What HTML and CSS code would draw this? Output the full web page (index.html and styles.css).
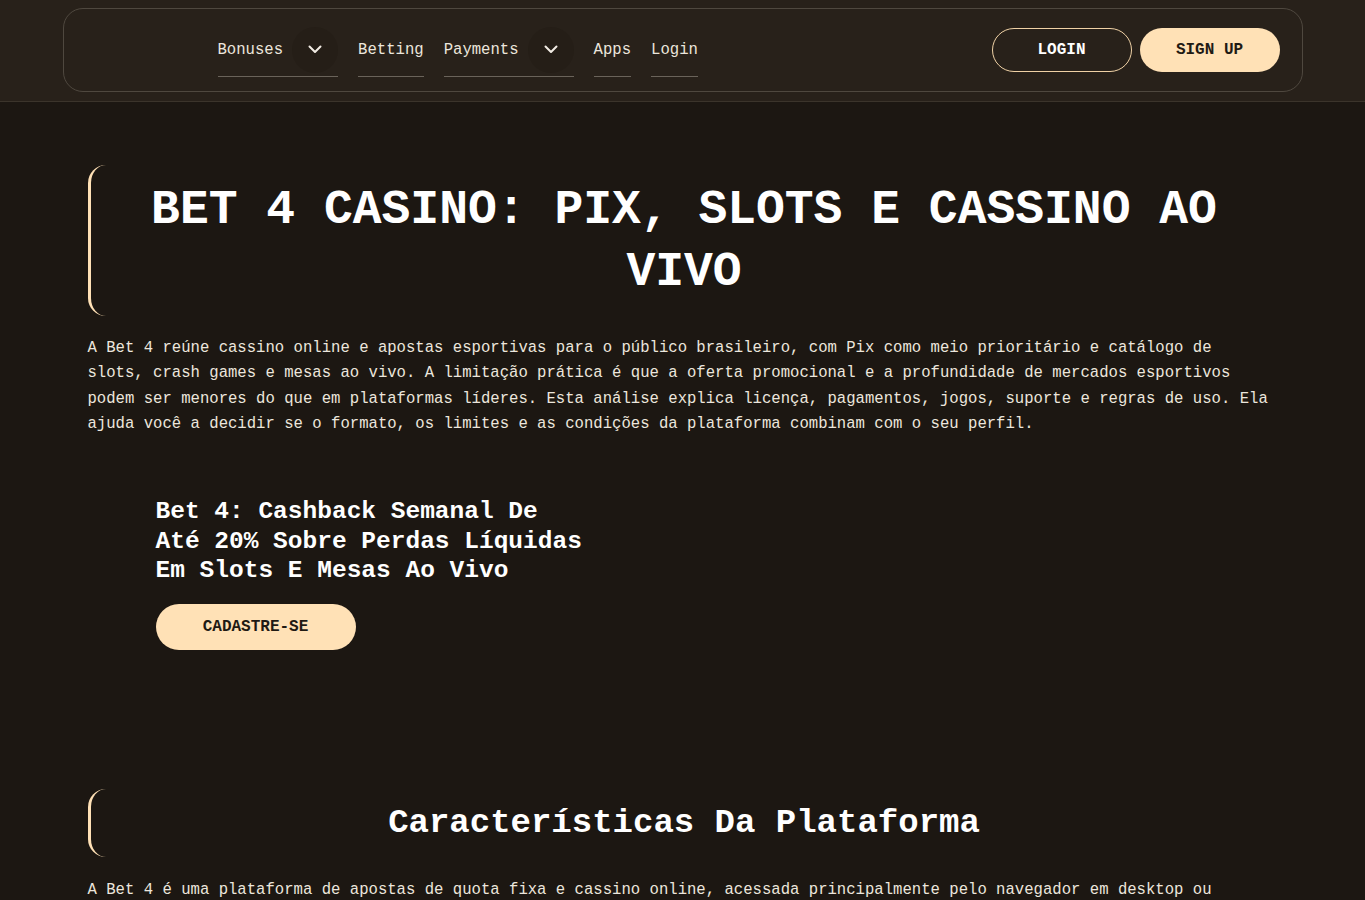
FILE: index.html
```html
<!DOCTYPE html>
<html lang="pt-BR">
<head>
<meta charset="utf-8">
<title>Bet 4 Casino</title>
<link rel="stylesheet" href="styles.css">
</head>
<body>
<header class="site-header">
  <div class="nav-shell">
    <div class="logo"></div>
    <nav class="menu">
      <div class="menu-item has-sub">
        <span class="menu-link">Bonuses</span>
        <span class="chev"><svg width="14" height="9" viewBox="0 0 14 9"><path d="M1.5 1.5 L7 7 L12.5 1.5" fill="none" stroke="#f2ece4" stroke-width="2" stroke-linecap="round" stroke-linejoin="round"/></svg></span>
      </div>
      <div class="menu-item"><span class="menu-link">Betting</span></div>
      <div class="menu-item has-sub">
        <span class="menu-link">Payments</span>
        <span class="chev"><svg width="14" height="9" viewBox="0 0 14 9"><path d="M1.5 1.5 L7 7 L12.5 1.5" fill="none" stroke="#f2ece4" stroke-width="2" stroke-linecap="round" stroke-linejoin="round"/></svg></span>
      </div>
      <div class="menu-item"><span class="menu-link">Apps</span></div>
      <div class="menu-item"><span class="menu-link">Login</span></div>
    </nav>
    <div class="auth">
      <a class="btn btn-outline">LOGIN</a>
      <a class="btn btn-solid">SIGN UP</a>
    </div>
  </div>
</header>

<main class="container">
  <section class="section">
    <div class="title-box title-box-lg">
      <h1>BET 4 CASINO: PIX, SLOTS E CASSINO AO VIVO</h1>
    </div>
    <p class="text">A Bet 4 reúne cassino online e apostas esportivas para o público brasileiro, com Pix como meio prioritário e catálogo de slots, crash games e mesas ao vivo. A limitação prática é que a oferta promocional e a profundidade de mercados esportivos podem ser menores do que em plataformas líderes. Esta análise explica licença, pagamentos, jogos, suporte e regras de uso. Ela ajuda você a decidir se o formato, os limites e as condições da plataforma combinam com o seu perfil.</p>

    <div class="promo">
      <h3>Bet 4: Cashback Semanal De Até 20% Sobre Perdas Líquidas Em Slots E Mesas Ao Vivo</h3>
      <a class="btn btn-solid btn-wide">CADASTRE-SE</a>
    </div>
  </section>

  <section class="section section-2">
    <div class="title-box title-box-md">
      <h2>Características Da Plataforma</h2>
    </div>
    <p class="text">A Bet 4 é uma plataforma de apostas de quota fixa e cassino online, acessada principalmente pelo navegador em desktop ou celular, com cadastro, depósitos e saques centralizados na mesma conta.</p>
  </section>
</main>
</body>
</html>
```

FILE: styles.css
```css
* { box-sizing: border-box; }

html, body {
  margin: 0;
  padding: 0;
}

body {
  background: #1c1712;
  color: #ece6dd;
  font-family: "Liberation Mono", "Courier New", monospace;
  font-size: 15.625px;
}

.site-header {
  background: #28211a;
  border-bottom: 1px solid #3b342b;
  padding: 8px 0 9px;
}

.nav-shell {
  width: 1240px;
  margin: 0 auto;
  height: 84px;
  border: 1px solid #4f483f;
  border-radius: 20px;
  display: flex;
  align-items: center;
  padding: 0 22px 0 0;
}

.logo {
  width: 154px;
  height: 40px;
}

.menu {
  display: flex;
  align-items: center;
  gap: 20px;
  height: 100%;
}

.menu-item {
  display: flex;
  align-items: flex-start;
  gap: 9px;
  height: 50px;
  margin-top: 3px;
  border-bottom: 1px solid #6a635a;
}

.menu-link {
  color: #ece6dd;
  font-size: 15.625px;
  line-height: 20px;
  padding-top: 13px;
}

.chev {
  width: 46px;
  height: 46px;
  border-radius: 50%;
  background: #251e17;
  display: flex;
  align-items: center;
  justify-content: center;
}

.auth {
  margin-left: auto;
  display: flex;
  gap: 8px;
}

.btn {
  display: inline-flex;
  align-items: center;
  justify-content: center;
  width: 140px;
  height: 44px;
  border-radius: 22px;
  font-family: "Liberation Mono", "Courier New", monospace;
  font-weight: bold;
  font-size: 16px;
  text-decoration: none;
}

.btn-outline {
  border: 1px solid #f0d2a6;
  color: #ffffff;
  background: transparent;
}

.btn-solid {
  background: #ffe1b6;
  color: #1f1a14;
}

.btn-wide {
  width: 200px;
  height: 46px;
  border-radius: 23px;
}

.container {
  width: 1240px;
  margin: 0 auto;
  padding: 0 25px;
}

.section {
  padding-top: 63px;
}

.section-2 {
  padding-top: 139px;
}

.title-box {
  border-left: 3px solid #ffe1b6;
  border-radius: 18px;
  display: flex;
  align-items: center;
  justify-content: center;
  text-align: center;
}

.title-box-lg {
  min-height: 151px;
  padding: 12px 40px;
}

.title-box-md {
  min-height: 68px;
  padding: 10px 40px;
}

h1 {
  margin: 0;
  font-size: 48px;
  line-height: 62px;
  font-weight: bold;
  color: #ffffff;
}

h2 {
  margin: 0;
  font-size: 34px;
  line-height: 42px;
  font-weight: bold;
  color: #ffffff;
}

.text {
  margin: 20px 0 0;
  max-width: 1185px;
  font-size: 15.625px;
  line-height: 25.3px;
  color: #ece6dd;
}

.section-2 .text {
  margin-top: 21px;
}

.promo {
  padding: 60px 0 0 68px;
}

.promo h3 {
  margin: 0 0 19px;
  width: 434px;
  font-size: 24.5px;
  line-height: 29.4px;
  font-weight: bold;
  color: #ffffff;
}
```
